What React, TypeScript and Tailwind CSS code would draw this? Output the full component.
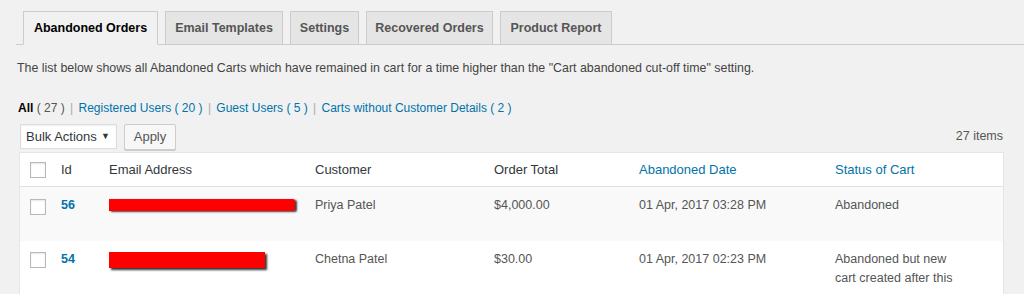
import React from "react";

const font = { fontFamily: '"Liberation Sans", Arial, sans-serif' };

function Tab({ label, active, w }: { label: string; active?: boolean; w: string }) {
  return (
    <div
      className={
        "h-[34px] -mb-px flex items-center justify-center border border-[#ccc] text-[12.5px] font-bold whitespace-nowrap " +
        w +
        (active ? " bg-[#f1f1f1] border-b-[#f1f1f1] text-[#000]" : " bg-[#e5e5e5] text-[#555]")
      }
    >
      {label}
    </div>
  );
}

function Check() {
  return <div className="w-[16px] h-[16px] border border-[#b4b9be] bg-white shadow-[inset_0_1px_2px_rgba(0,0,0,0.1)]" />;
}

const cols = "grid grid-cols-[41px_48px_206px_179px_145px_196px_1fr]";

export default function App() {
  return (
    <div style={font} className="w-[1024px] h-[294px] bg-[#f1f1f1] overflow-hidden text-[12.5px] text-[#444]">
      {/* Tabs */}
      <div className="pt-[11px] ml-[16px] border-b border-[#ccc] flex pl-[7px] gap-[7px]">
        <Tab label="Abandoned Orders" active w="w-[135px]" />
        <Tab label="Email Templates" w="w-[118px]" />
        <Tab label="Settings" w="w-[69px]" />
        <Tab label="Recovered Orders" w="w-[127px]" />
        <Tab label="Product Report" w="w-[112px]" />
      </div>

      <p className="ml-[17px] mt-[14px] leading-[19px] whitespace-nowrap text-[12.4px]">
        The list below shows all Abandoned Carts which have remained in cart for a time higher than the "Cart abandoned cut-off time" setting.
      </p>

      <div className="ml-[18px] mt-[21px] leading-[19px] whitespace-nowrap text-[#555] text-[12px]">
        <span className="text-[#000] font-bold">All</span> ( 27 ) <span className="text-[#aaa] mx-[2px]">|</span>{" "}
        <span className="text-[#0073aa]">Registered Users ( 20 )</span>{" "}
        <span className="text-[#aaa] mx-[2px]">|</span> <span className="text-[#0073aa]">Guest Users ( 5 )</span>{" "}
        <span className="text-[#aaa] mx-[2px]">|</span>{" "}
        <span className="text-[#0073aa]">Carts without Customer Details ( 2 )</span>
      </div>

      {/* Bulk actions */}
      <div className="ml-[20px] mr-[20px] mt-[5px] flex items-center h-[27px]">
        <div className="w-[97px] h-[25px] bg-white border border-[#ddd] flex items-center pl-[5px] pr-[6px] justify-between text-[#32373c] text-[13px] shadow-[inset_0_1px_2px_rgba(0,0,0,0.07)]">
          <span>Bulk Actions</span>
          <span className="text-[9px]">▼</span>
        </div>
        <div className="ml-[7px] w-[52px] h-[26px] bg-[#f7f7f7] border border-[#ccc] rounded-[2px] shadow-[0_1px_0_#ccc] flex items-center justify-center text-[#555] text-[13px]">
          Apply
        </div>
        <div className="ml-auto text-[#555] mr-[1px]">27 items</div>
      </div>

      {/* Table */}
      <div className="ml-[19px] mr-[20px] mt-[2px] bg-white border border-[#e5e5e5] text-[#555]">
        <div className={cols + " h-[34px] items-center border-b border-[#e1e1e1] text-[#32373c] text-[13px]"}>
          <div className="pl-[10px] flex"><Check /></div>
          <div>Id</div>
          <div>Email Address</div>
          <div>Customer</div>
          <div>Order Total</div>
          <div className="text-[#0073aa]">Abandoned Date</div>
          <div className="text-[#0073aa]">Status of Cart</div>
        </div>

        <div className={cols + " h-[54px] bg-[#f9f9f9] pt-[9px] leading-[19px]"}>
          <div className="pl-[10px] pt-[3px]"><Check /></div>
          <div className="text-[#0073aa] font-bold">56</div>
          <div className="pt-[3px]">
            <div className="w-[186px] h-[12px] bg-[#ff0000] rounded-r-[2px] shadow-[2px_1px_2px_rgba(0,0,0,0.75)]" />
          </div>
          <div>Priya Patel</div>
          <div>$4,000.00</div>
          <div>01 Apr, 2017 03:28 PM</div>
          <div>Abandoned</div>
        </div>

        <div className={cols + " h-[60px] bg-white pt-[9px] leading-[19px]"}>
          <div className="pl-[10px] pt-[2px]"><Check /></div>
          <div className="text-[#0073aa] font-bold">54</div>
          <div className="pt-[2px]">
            <div className="w-[156px] h-[16px] bg-[#ff0000] shadow-[2px_2px_2px_rgba(0,0,0,0.8)]" />
          </div>
          <div>Chetna Patel</div>
          <div>$30.00</div>
          <div>01 Apr, 2017 02:23 PM</div>
          <div>
            Abandoned but new
            <br />
            cart created after this
          </div>
        </div>
      </div>
    </div>
  );
}
